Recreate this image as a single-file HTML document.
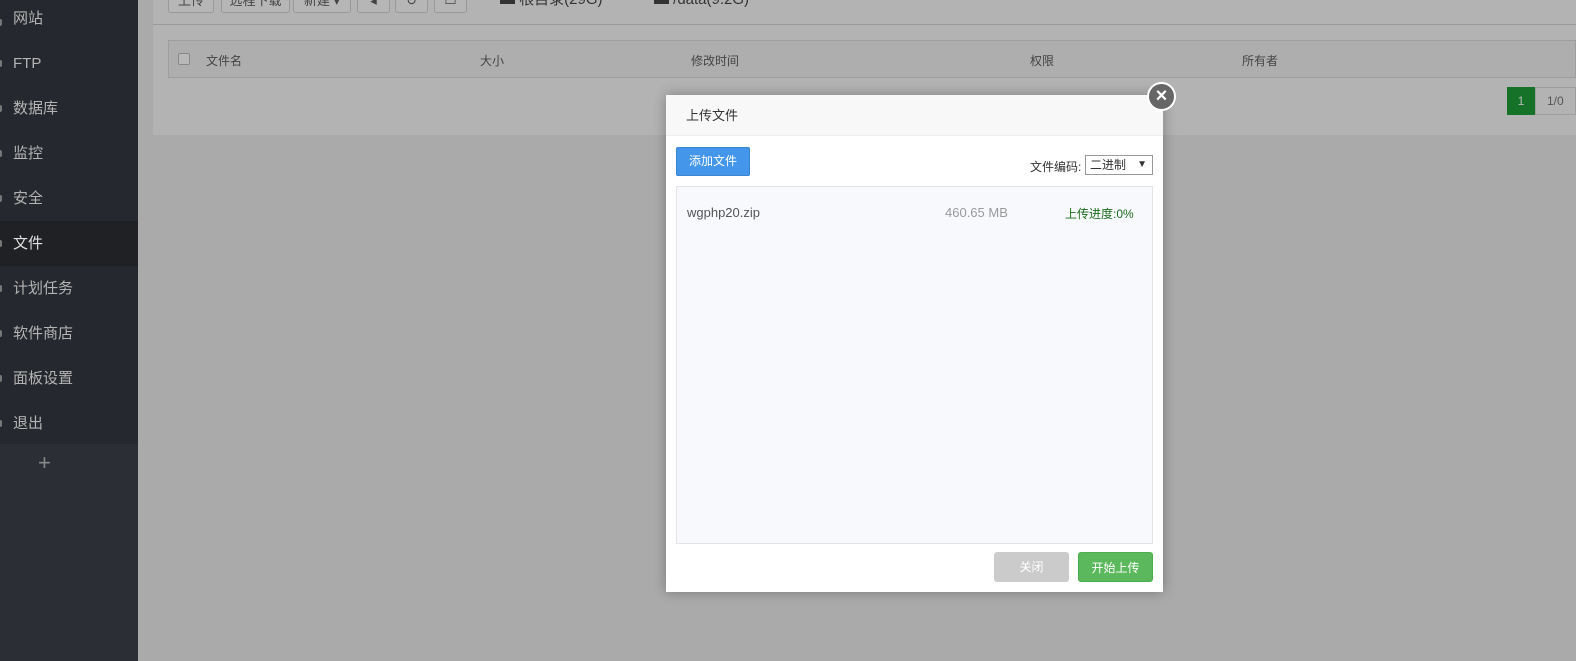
<!DOCTYPE html>
<html><head><meta charset="utf-8"><style>
*{margin:0;padding:0;box-sizing:border-box}
body{width:1576px;height:661px;overflow:hidden;position:relative;background:#aaaaaa;font-family:"Liberation Sans","Noto Sans CJK SC",sans-serif;font-size:12px}
.side{position:absolute;left:0;top:0;width:138px;height:661px;background:#2b2f35}
.side .menu{background:#25282e;height:444px}
.side .it{height:45px;line-height:45px;padding-left:13px;color:#b4b4b4;font-size:15px;position:relative}
.side .it.act{background:#1f2125;color:#e0e0e0}
.side .it:before{content:"";position:absolute;left:-3px;top:19px;width:5px;height:7px;background:#777;border-radius:2px}
.plus{position:absolute;left:38px;top:450px;color:#888;font-size:22px}
.main{position:absolute;left:153px;top:0;width:1423px;height:135px;background:#b3b3b3}
.btn{position:absolute;top:-8px;height:21px;border:1px solid #999;border-radius:3px;background:#b6b6b6;color:#444;font-size:13px;text-align:center;line-height:15px;overflow:hidden}
.tt{position:absolute;top:-8px;color:#333;font-size:15px;line-height:16px}
.tbl{position:absolute;left:168px;top:40px;width:1408px;height:38px;border:1px solid #9e9e9e;background:#aeaeae;color:#444}
.tbl span{position:absolute;top:11px}
.line{position:absolute;left:153px;top:24px;width:1423px;height:1px;background:#999}
.dlg{position:absolute;left:666px;top:95px;width:497px;height:497px;background:#fff;box-shadow:0 0 12px rgba(0,0,0,.3)}
.hd{height:41px;background:#f8f8f8;border-bottom:1px solid #eee;line-height:41px;padding-left:20px;font-size:13px;color:#333}
.add{position:absolute;left:10px;top:52px;width:74px;height:29px;background:#4496ea;border:1px solid #3a84d0;border-radius:2px;color:#fff;line-height:27px;text-align:center;font-size:12px}
.enc{position:absolute;left:364px;top:63px;color:#333;font-size:12px}
.sel{position:absolute;left:419px;top:60px;width:68px;height:20px;border:1px solid #999;font-size:12px;line-height:18px;padding-left:4px;color:#333}
.list{position:absolute;left:10px;top:91px;width:477px;height:358px;border:1px solid #e3e3e8;background:#f8f9fd}
.close{position:absolute;left:1147px;top:82px;width:29px;height:29px;border-radius:50%;background:#666;border:2px solid #fff;color:#fff;text-align:center;line-height:24px;font-size:20px;font-weight:bold}
.fb{position:absolute;top:457px;width:75px;height:30px;border-radius:3px;color:#fff;text-align:center;line-height:30px;font-size:12px}
</style></head><body>
<div class="side"><div class="menu">
<div class="it" style="height:41px;line-height:38px">网站</div>
<div class="it">FTP</div><div class="it">数据库</div><div class="it">监控</div><div class="it">安全</div>
<div class="it act">文件</div><div class="it">计划任务</div><div class="it">软件商店</div><div class="it">面板设置</div><div class="it">退出</div>
</div><div class="plus">+</div></div>
<div class="main"></div>
<div class="btn" style="left:168px;width:46px">上传</div>
<div class="btn" style="left:221px;width:69px">远程下载</div>
<div class="btn" style="left:293px;width:58px">新建 ▾</div>
<div class="btn" style="left:357px;width:33px">◂</div>
<div class="btn" style="left:395px;width:33px">↻</div>
<div class="btn" style="left:434px;width:33px">▭</div>
<div class="tt" style="left:500px">▬ 根目录(29G)</div>
<div class="tt" style="left:654px">▬ /data(9.2G)</div>
<div class="line"></div>
<div class="tbl"><span style="left:9px;top:12px;width:12px;height:12px;border:1px solid #888;border-radius:2px;background:#b8b8b8"></span>
<span style="left:37px">文件名</span><span style="left:311px">大小</span><span style="left:522px">修改时间</span><span style="left:861px">权限</span><span style="left:1073px">所有者</span></div>
<div style="position:absolute;left:1507px;top:87px;width:28px;height:28px;background:#157228;color:#bbb;text-align:center;line-height:28px">1</div>
<div style="position:absolute;left:1535px;top:87px;width:41px;height:28px;border:1px solid #9e9e9e;color:#555;line-height:26px;padding-left:11px">1/0</div>
<div class="dlg">
<div class="hd">上传文件</div>
<div class="add">添加文件</div>
<div class="enc">文件编码:</div>
<div class="sel">二进制<span style="position:absolute;right:5px;font-size:10px">▼</span></div>
<div class="list">
<span style="position:absolute;left:10px;top:18px;color:#555;font-size:13px">wgphp20.zip</span>
<span style="position:absolute;left:268px;top:18px;color:#999;font-size:13px">460.65 MB</span>
<span style="position:absolute;left:388px;top:18px;color:#1b6b1b;font-size:12px">上传进度:0%</span>
</div>
<div class="fb" style="left:328px;background:#cbcbcb">关闭</div>
<div class="fb" style="left:412px;background:#5cb85c;border:1px solid #4cae4c">开始上传</div>
</div>
<div class="close">×</div>
</body></html>
